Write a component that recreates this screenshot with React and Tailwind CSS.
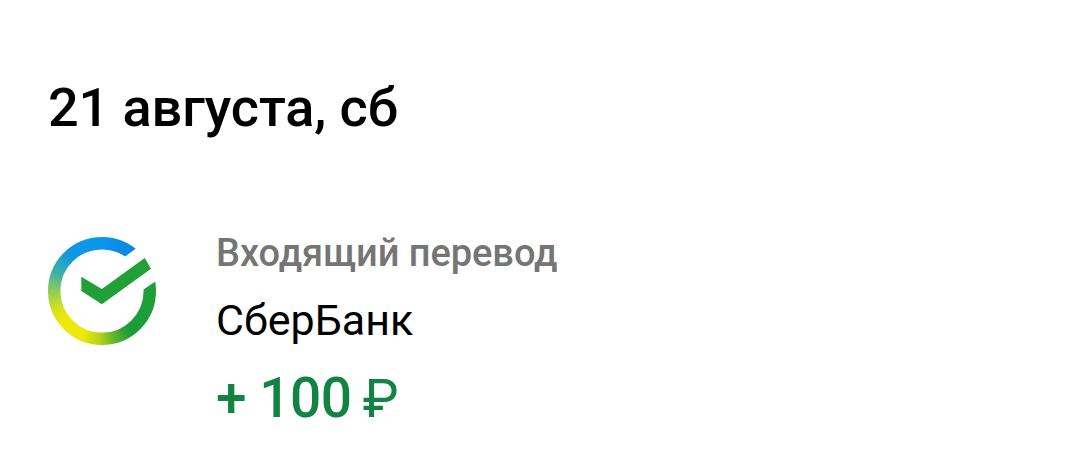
const operation = {
  kind: "Входящий перевод",
  bank: "СберБанк",
  sum: "+ 100",
};

function SberLogo() {
  return (
    <svg viewBox="0 0 108 108" className="h-[108px] w-[108px] shrink-0">
      <defs>
        <mask id="ring">
          <circle cx="54" cy="54" r="47.8" fill="none" stroke="#fff" strokeWidth="12.4" />
          {/* gap for the tick */}
          <path d="M60 32 L105 -1 H120 V35.8 L80 63.1 Z" fill="#000" />
        </mask>
      </defs>
      <foreignObject width="108" height="108" mask="url(#ring)">
        <div className="h-[108px] w-[108px] bg-[conic-gradient(#0a96ee_0deg,#0f84dc_40deg,#21a038_75deg,#189c3a_145deg,#5cb42c_165deg,#b4d21c_182deg,#eae80a_202deg,#f0ea08_230deg,#d0e020_250deg,#90cc58_270deg,#3cb0a8_292deg,#1098e0_318deg,#0a96ee_360deg)]" />
      </foreignObject>
      <path d="M33.3 39.7 L53.9 52 L96.7 21 L103 31.8 L53.9 67.3 L33.3 54 Z" fill="#21a038" />
    </svg>
  );
}

export default function App() {
  return (
    <div className="h-[467px] w-[1080px] overflow-hidden bg-white px-12 pt-[76px] font-['Roboto',sans-serif] text-black">
      <h1 className="text-[54px] font-medium leading-[64px] tracking-[-0.08px]">21 августа, сб</h1>

      <section className="mt-[97px] flex gap-[60px]">
        <SberLogo />
        <div className="-mt-[9px] whitespace-nowrap">
          <p className="text-[38px] font-medium leading-[50px] tracking-[-0.05px] text-[#757575]">
            {operation.kind}
          </p>
          <p className="mt-[17px] text-[43px] leading-[50px]">{operation.bank}</p>
          <p className="mt-[21px] text-[55px] font-medium leading-[64px] tracking-[-0.5px] text-[#138343]">
            {operation.sum} <span className="-ml-[2px] text-[54px] font-normal">₽</span>
          </p>
        </div>
      </section>
    </div>
  );
}
